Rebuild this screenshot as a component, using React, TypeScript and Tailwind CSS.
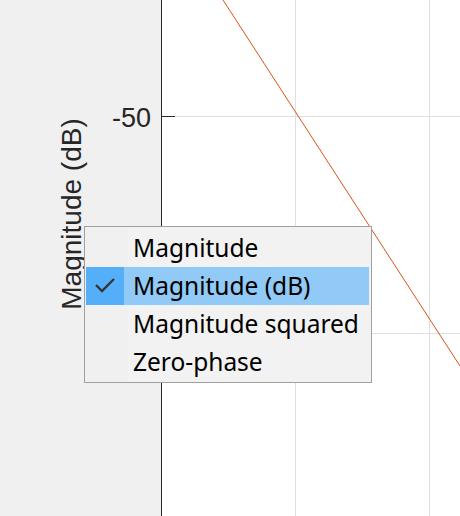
import React from "react";

const items = [
  { label: "Magnitude", checked: false },
  { label: "Magnitude (dB)", checked: true },
  { label: "Magnitude squared", checked: false },
  { label: "Zero-phase", checked: false },
];

export default function App() {
  return (
    <div className="relative w-[460px] h-[516px] overflow-hidden bg-[#f0f0f0] flex">
      {/* left axis area */}
      <div
        className="relative w-[161px] h-full shrink-0 text-[#262626]"
        style={{ fontFamily: '"Liberation Sans", Arial, sans-serif' }}
      >
        <div className="absolute right-[10px] top-[105px] text-[27px] leading-[27px]">-50</div>
        <div className="absolute left-[72px] top-[214px] w-0 h-0 flex items-center justify-center">
          <div className="-rotate-90 whitespace-nowrap text-[28px] leading-[28px]">Magnitude (dB)</div>
        </div>
      </div>
      {/* plot area */}
      <div className="flex-1 h-full bg-white border-l border-[#262626]">
        <svg width="298" height="516" viewBox="0 0 298 516">
          <g stroke="#dfdfdf" strokeWidth="1" shapeRendering="crispEdges">
            <line x1="133.5" y1="0" x2="133.5" y2="516" />
            <line x1="267.5" y1="0" x2="267.5" y2="516" />
            <line x1="0" y1="116.5" x2="298" y2="116.5" />
            <line x1="0" y1="333.5" x2="298" y2="333.5" />
          </g>
          <line x1="0" y1="116.5" x2="13" y2="116.5" stroke="#262626" strokeWidth="1" shapeRendering="crispEdges" />
          <line x1="61" y1="0" x2="298" y2="366" stroke="#d95319" strokeWidth="1" />
        </svg>
      </div>
      {/* context menu */}
      <div
        className="absolute left-[84px] top-[226px] w-[288px] border border-[#a0a0a0] bg-[#f2f2f2] pt-[2px] pb-[1px] pl-[1px] pr-[2px]"
        style={{ fontFamily: '"Noto Sans", "Open Sans", sans-serif' }}
      >
        <div className="absolute left-0 top-0 bottom-0 w-[43px] bg-[#f0f0f0]" />
        {items.map((it) => (
          <div key={it.label} className={`relative flex h-[38px] ${it.checked ? "bg-[#91c9f7]" : ""}`}>
            <div className={`w-[38px] h-full flex items-center justify-center ${it.checked ? "bg-[#55aff8]" : ""}`}>
              {it.checked && (
                <svg width="22" height="18" viewBox="0 0 22 18">
                  <path d="M2 8 L8 14 L20 2" fill="none" stroke="#333333" strokeWidth="2.3" />
                </svg>
              )}
            </div>
            <div className="pl-[9px] text-[24.5px] leading-[38px] text-black whitespace-nowrap">{it.label}</div>
          </div>
        ))}
      </div>
    </div>
  );
}
